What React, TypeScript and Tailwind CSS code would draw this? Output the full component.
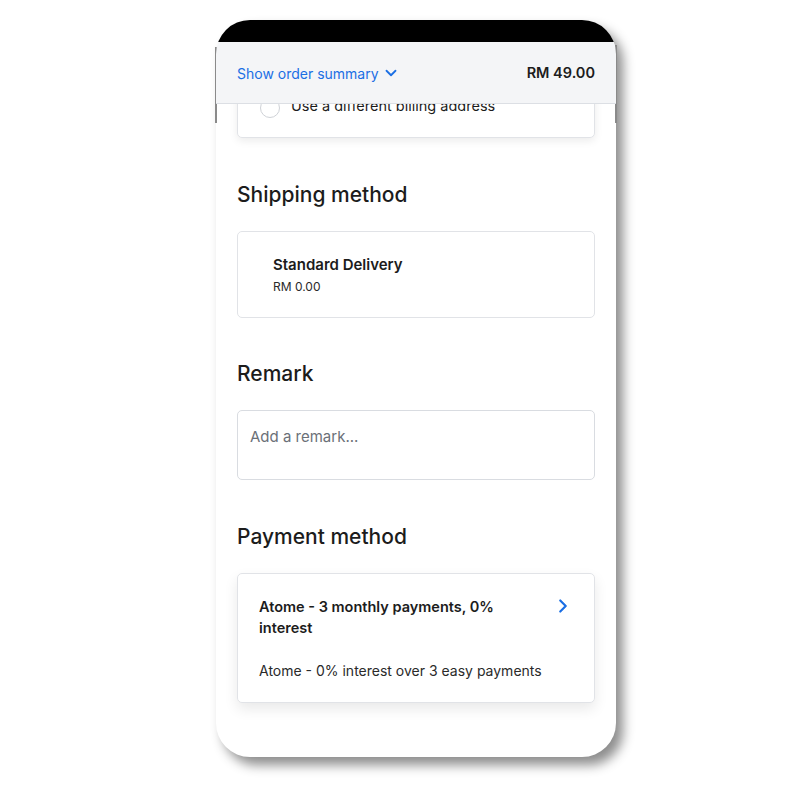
import { ChevronDown, ChevronRight } from 'lucide-react'

export default function App() {
    return (
        <div className="w-[800px] h-[800px] bg-white pt-[20px] pl-[216px] font-['Inter','Noto_Sans',sans-serif] text-[#1c1c1c]">
            <div className="relative w-[400px] h-[737px] rounded-[34px] bg-white shadow-[7px_8px_12px_rgba(0,0,0,0.45)]">
                {/* frame edge marks */}
                <div className="absolute left-[-1px] top-[27px] w-[2px] h-[76px] bg-[#8a8a8a]" />
                <div className="absolute right-[-1px] top-[25px] w-[2px] h-[78px] bg-[#8a8a8a]" />

                <div className="relative h-full rounded-[34px] overflow-hidden flex flex-col">
                    <div className="h-[22px] bg-black shrink-0" />

                    <div className="relative flex-1 overflow-hidden">
                        {/* sticky header */}
                        <div className="absolute top-0 left-0 right-0 z-10 h-[62px] bg-[#f4f5f7] border-b border-[#dcdfe4] flex items-center justify-between px-[21px] pt-[1px]">
                            <button type="button" className="flex items-center gap-[3px] text-[14px] text-[#1b6fe4]">
                                Show order summary
                                <ChevronDown className="w-[18px] h-[18px]" strokeWidth={2.4} />
                            </button>
                            <span className="text-[14.5px] font-semibold text-[#1c1c1c]">RM 49.00</span>
                        </div>

                        <div className="px-[21px] flex flex-col">
                            {/* billing card (scrolled under header) */}
                            <div className="border border-[#e1e3e7] rounded-[5px] bg-white shadow-[0_3px_8px_rgba(0,0,0,0.08)] pt-[55px] pb-[19px] pl-[22px] flex items-center gap-[11px]">
                                <span className="w-[20px] h-[20px] rounded-full border border-[#cfd2d7]" />
                                <span className="text-[14.5px] leading-[20px] -mt-[4px]">Use a different billing address</span>
                            </div>

                            <h2 className="mt-[43px] text-[21px] leading-[28px] font-medium">Shipping method</h2>
                            <div className="mt-[22px] h-[87px] border border-[#e1e3e7] rounded-[5px] bg-white pt-[23px] pl-[35px]">
                                <div className="text-[15px] leading-[20px] font-semibold">Standard Delivery</div>
                                <div className="mt-[4px] text-[12px] leading-[16px] text-[#2a2a2a]">RM 0.00</div>
                            </div>

                            <h2 className="mt-[42px] text-[21px] leading-[28px] font-medium">Remark</h2>
                            <div className="mt-[22px] h-[70px] border border-[#d9dce1] rounded-[5px] bg-white pt-[13px] pl-[12px]">
                                <span className="text-[15px] leading-[20px] text-[#6b7078]">Add a remark...</span>
                            </div>

                            <h2 className="mt-[43px] text-[21px] leading-[28px] font-medium">Payment method</h2>
                            <div className="mt-[22px] h-[130px] border border-[#e1e3e7] rounded-[5px] bg-white shadow-[0_6px_14px_rgba(0,0,0,0.09)] pt-[22px] pl-[21px] pr-[20px]">
                                <div className="flex items-start justify-between">
                                    <div className="w-[262px] text-[14.5px] leading-[21px] font-semibold">
                                        Atome - 3 monthly payments, 0% interest
                                    </div>
                                    <ChevronRight className="w-[22px] h-[22px] text-[#1b6fe4] -mt-[1px]" strokeWidth={2.4} />
                                </div>
                                <div className="mt-[23px] text-[14px] leading-[20px] text-[#2a2a2a]">
                                    Atome - 0% interest over 3 easy payments
                                </div>
                            </div>
                        </div>
                    </div>
                </div>
            </div>
        </div>
    )
}
